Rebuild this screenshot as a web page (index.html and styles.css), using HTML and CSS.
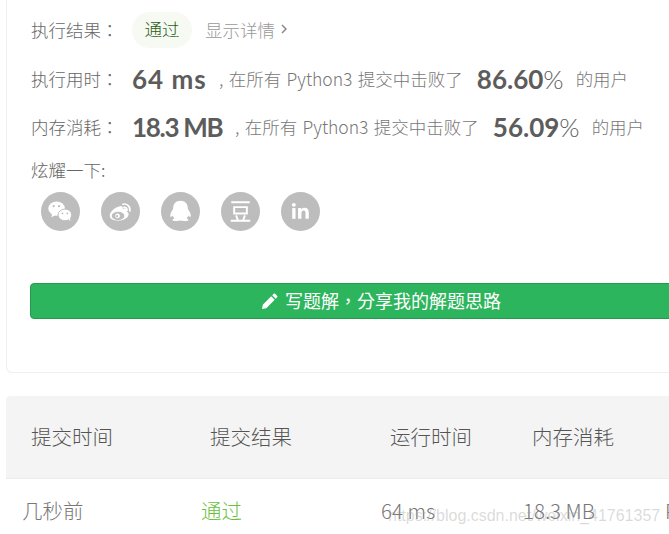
FILE: index.html
```html
<!DOCTYPE html>
<html lang="zh">
<head>
<meta charset="utf-8">
<title>提交结果</title>
<link rel="stylesheet" href="styles.css">
</head>
<body>
<div class="page">
  <section class="card">
    <div class="row row-result">
      <span class="label" lang="zh-Hant">执行结果：</span>
      <span class="pill">通过</span>
      <span class="detail">显示详情 <svg class="chev" width="6" height="10" viewBox="0 0 6 10"><path d="M1 1l4 4-4 4" fill="none" stroke="#888" stroke-width="1.5"/></svg></span>
    </div>
    <div class="row row-time">
      <span class="label" lang="zh-Hant">执行用时：</span>
      <span class="num">64 ms</span>
      <span class="txt">, 在所有 Python3 提交中击败了</span>
      <span class="pct">86.60<i>%</i></span>
      <span class="txt">的用户</span>
    </div>
    <div class="row row-mem">
      <span class="label" lang="zh-Hant">内存消耗：</span>
      <span class="num">18.3 MB</span>
      <span class="txt">, 在所有 Python3 提交中击败了</span>
      <span class="pct">56.09<i>%</i></span>
      <span class="txt">的用户</span>
    </div>
    <div class="share-title">炫耀一下:</div>
    <div class="share">
      <span class="ico"><svg viewBox="0 0 40 40"><g fill="#fff"><ellipse cx="16" cy="17" rx="8.500" ry="7.300"/><path d="M11.500 22l-1 4 5-2.500z"/><ellipse cx="24.500" cy="23.500" rx="7" ry="6" stroke="#bdbdbd" stroke-width="1"/><path d="M28 27.500l2 2.500-.2-4z"/></g><g fill="#bdbdbd"><circle cx="13" cy="14.500" r="1.100"/><circle cx="18.500" cy="14.500" r="1.100"/><circle cx="22" cy="22" r=".9"/><circle cx="27" cy="22" r=".9"/></g></svg></span>
      <span class="ico"><svg viewBox="0 0 40 40"><path d="M18 15c3-1.500 5 0 4.200 2.300 3-1 5 .5 4.300 3 1.200.4 1.800 1.500 1.800 2.500 0 3.500-5 6.500-10.500 6.500S9 27.500 9 24c0-3 4-7.700 9-9z" fill="#fff"/><ellipse cx="17.500" cy="24.500" rx="6.500" ry="4.300" fill="#bdbdbd"/><circle cx="17" cy="24.500" r="2.400" fill="#fff"/><circle cx="16.500" cy="24.800" r="1.100" fill="#bdbdbd"/><path d="M22.500 12.500c4-1 8 2.500 7 7M23.500 15.800c2-.4 3.600 1.200 3.200 3.200" fill="none" stroke="#fff" stroke-width="1.700" stroke-linecap="round"/></svg></span>
      <span class="ico"><svg viewBox="0 0 40 40"><path d="M20 9c-5 0-7.500 3.500-7.500 7.500 0 1-.3 1.500-1 2.500-1.500 2-2.500 5-1.800 6.500.5.500 1.500-.5 2.300-1.500.4 1.300 1 2.300 1.800 3.200-1.300.5-2 1-2 1.600 0 1 2.700 1.200 4.500 1 1.200-.2 2.700-.5 3.700-.5s2.500.3 3.700.5c1.800.2 4.500 0 4.500-1 0-.6-.7-1.100-2-1.600.8-.9 1.400-1.900 1.800-3.200.8 1 1.800 2 2.300 1.500.7-1.500-.3-4.500-1.800-6.500-.7-1-1-1.500-1-2.500C27.500 12.500 25 9 20 9z" fill="#fff"/></svg></span>
      <span class="ico"><svg viewBox="0 0 40 40"><path d="M10.500 10.500h19M13.500 15.500h13v6.500h-13zM10 29.500h20M15.500 24l1.800 5M24.500 24l-1.800 5" fill="none" stroke="#fff" stroke-width="2"/></svg></span>
      <span class="ico"><svg viewBox="0 0 40 40"><g fill="#fff"><rect x="11.500" y="16.500" width="3.400" height="11"/><circle cx="13.200" cy="13.200" r="2"/><path d="M17.500 16.500h3.200V18c.8-1.200 2-1.800 3.500-1.800 3 0 4.300 1.800 4.300 5v6.300h-3.400v-5.800c0-1.700-.5-2.600-1.900-2.600s-2.200 1-2.200 2.700v5.700h-3.500z"/></g></svg></span>
    </div>
    <button class="write" lang="zh-Hant"><svg width="17" height="17" viewBox="0 0 17 17"><path d="M1 16l.8-4.300 8.400-8.400 3.500 3.500-8.400 8.400zM11.200 2.300l1.500-1.500c.4-.4 1-.4 1.400 0l2.100 2.100c.4.400.4 1 0 1.400l-1.500 1.500z" fill="#fff"/></svg><span class="write-text">写题解，分享我的解题思路</span></button>
  </section>
  <section class="table">
    <div class="thead">
      <span class="th c1">提交时间</span>
      <span class="th c2">提交结果</span>
      <span class="th c3">运行时间</span>
      <span class="th c4">内存消耗</span>
    </div>
    <div class="tbody">
      <span class="td d1">几秒前</span>
      <span class="td d2">通过</span>
      <span class="td d3">64 ms</span>
      <span class="td d4">18.3 MB</span>
      <span class="td d5">P</span>
    </div>
  </section>
  <div class="watermark">https://blog.csdn.net/weixin_41761357</div>
</div>
</body>
</html>
```
FILE: styles.css
```css
html, body { margin: 0; padding: 0; background: #fff; }
body { width: 669px; height: 534px; overflow: hidden; position: relative; font-family: "Noto Sans CJK SC", "Noto Sans", sans-serif; font-weight: 300; color: #666; }
.page { width: 760px; height: 534px; position: relative; }
.card { margin-left: 6px; height: 373px; box-sizing: border-box; padding: 12px 0 0 24px; border: 1px solid #efefef; border-top: 0; border-radius: 0 0 6px 6px; }
.row { display: flex; align-items: center; white-space: nowrap; font-size: 17.5px; }
.row-result { height: 34px; }
.row-time { height: 34px; margin-top: 15px; }
.row-mem { height: 34px; margin-top: 14px; }
.label { width: 101px; flex: none; color: #666; font-family: "Noto Sans CJK TC", sans-serif; }
.pill { width: 60px; height: 36px; line-height: 34px; margin-top: 2px; text-align: center; border-radius: 18px; background: #f6faf2; color: #2b5d19; }
.detail { margin-left: 13px; color: #999; display: flex; align-items: center; gap: 6px; }
.num { font: 700 26px/34px Lato, sans-serif; color: #5c5c5c; }
.row-time .num { width: 87px; letter-spacing: 1px; margin-top: 2px; }
.row-mem .num { width: 103px; letter-spacing: -1.300px; margin-top: 2px; }
.txt { color: #777; word-spacing: 1.500px; }
.pct { font: 700 26px/34px Lato, sans-serif; color: #5c5c5c; margin: 2px 12px 0 14px; }
.pct i { font-style: normal; font-weight: 300; }
.share-title { margin-top: 15px; font-size: 17.5px; line-height: 24px; color: #666; }
.share { display: flex; gap: 21px; margin: 10px 0 0 10px; }
.ico { width: 39px; height: 39px; border-radius: 50%; background: #bdbdbd; display: block; }
.ico svg { display: block; width: 39px; height: 39px; }
.write { display: flex; align-items: center; justify-content: center; gap: 7px; width: 700px; height: 36px; margin-top: 52px; margin-left: -1px; padding: 0 0 0 2px; border: 1px solid #259a4e; border-radius: 4px; background: #2db55d; color: #fff; font: 400 18px "Noto Sans CJK TC", sans-serif; }
.write-text { margin-top: -2px; }
.table { margin-top: 23px; }
.thead { height: 82px; width: 760px; background: #f4f4f4; margin-left: 6px; border-bottom: 1px solid #ececec; border-radius: 4px 0 0 0; display: flex; align-items: center; font-size: 20.500px; color: #555; }
.th { flex: none; margin-top: -2px; }
.c1 { margin-left: 25px; width: 179px; }
.c2 { width: 180px; }
.c3 { width: 142px; }
.tbody { height: 55px; display: flex; align-items: center; font-size: 20.500px; color: #777; white-space: nowrap; }
.td { margin-top: 6px; flex: none; }
.d1 { margin-left: 22px; width: 179px; }
.d2 { width: 180px; color: #6cbf3d; }
.d3 { width: 142px; }
.d4 { width: 142px; }
.watermark { position: absolute; left: 388px; top: 507px; font: 400 16px "Liberation Sans", sans-serif; color: rgba(150,150,150,.35); white-space: nowrap; }
```
